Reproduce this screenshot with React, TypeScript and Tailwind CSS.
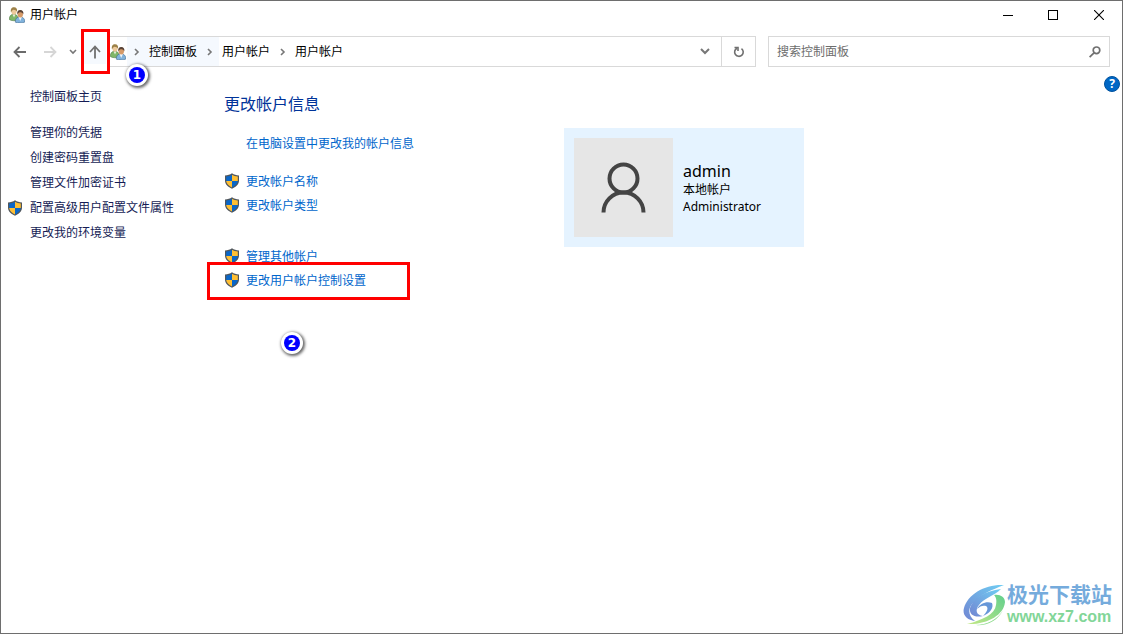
import { useState } from "react";
import type { ReactNode } from "react";

interface Crumb {
  label: string;
  hot?: boolean;
}

interface Task {
  label: string;
  shield?: boolean;
}

const crumbs: Crumb[] = [{ label: "控制面板", hot: true }, { label: "用户帐户" }, { label: "用户帐户" }];

const sideTasks: Task[] = [
  { label: "管理你的凭据" },
  { label: "创建密码重置盘" },
  { label: "管理文件加密证书" },
  { label: "配置高级用户配置文件属性", shield: true },
  { label: "更改我的环境变量" },
];

function UsersIcon() {
  return (
    <svg width="16" height="16" viewBox="0 0 16 16" className="shrink-0" aria-hidden="true">
      <path d="M0.300 12.500C0.300 9 1.800 7.300 4.800 7.300S9 9 9 13C6.500 14 2.500 14 .3 12.500Z" fill="#7fb668" stroke="#4d7a45" strokeWidth=".6" />
      <path d="M3.600 7.500L5 10.500 6.400 7.500Z" fill="#e8f0e0" />
      <ellipse cx="5" cy="4.300" rx="2.600" ry="3.500" fill="#edc99a" />
      <path d="M2 5.500C1.300 1.800 2.600.3 5 .3S8.500 1.900 8 4.600C7.300 3.500 6 2.800 4.600 2.700 3.500 3 2.600 3.900 2 5.500Z" fill="#9c8148" />
      <path d="M6.300 15.200C6.100 11.500 8 9.900 11 9.900S15.900 11.600 15.900 15C13.500 16.200 8.500 16.200 6.300 15.200Z" fill="#80b2dc" stroke="#456b90" strokeWidth=".6" />
      <path d="M9.600 10L11.200 14 12.900 10Z" fill="#f1f6fa" />
      <ellipse cx="11.300" cy="7" rx="2.700" ry="3.500" fill="#d69a68" />
      <path d="M8.300 7.400C7.800 4.300 9.100 2.900 11.300 2.900S14.900 4.400 14.300 7.600C13.900 6.100 12.900 5.500 11.600 5.300 10 5.300 9.100 5.900 8.300 7.400Z" fill="#594336" />
    </svg>
  );
}

function ShieldIcon() {
  return (
    <svg width="16" height="16" viewBox="0 0 16 16" className="shrink-0" aria-hidden="true">
      <path d="M8 .3C6 1.800 3.800 2.300 1 2.500V7.500C1 11.500 4.300 14 8 15.700 11.700 14 15 11.500 15 7.500V2.500C12.200 2.300 10 1.800 8 .3Z" fill="#50565c" />
      <path d="M8 1.700C6.200 2.900 4.500 3.300 2.200 3.500V8H8Z" fill="#0a66c8" />
      <path d="M8 1.700C9.800 2.900 11.500 3.300 13.800 3.500V8H8Z" fill="#ffbf33" />
      <path d="M2.200 8C2.400 11 5 12.900 8 14.500V8Z" fill="#ffbf33" />
      <path d="M13.800 8C13.600 11 11 12.900 8 14.500V8Z" fill="#0a66c8" />
    </svg>
  );
}

function Arrow({ d }: { d: string }) {
  return (
    <svg width="14" height="14" viewBox="0 0 14 14" fill="none" stroke="currentColor" strokeWidth="1.800" aria-hidden="true">
      <path d={d} />
    </svg>
  );
}

function ChevronRight() {
  return (
    <span className="flex w-[19px] justify-center">
      <svg width="6" height="8" viewBox="0 0 6 8" fill="none" stroke="#777" strokeWidth="1.600" aria-hidden="true">
        <path d="M1 1L4 4 1 7" />
      </svg>
    </span>
  );
}

function Step({ children, className }: { children: ReactNode; className: string }) {
  return (
    <span className={`absolute z-10 flex size-[22px] items-center justify-center rounded-full bg-white shadow-[1px_1px_3px_1px_rgba(0,0,0,0.6)] ${className}`}>
      <span className="flex size-4 items-center justify-center rounded-full bg-[#0000ff] font-['DejaVu_Sans',sans-serif] text-xs leading-4 font-bold text-white">
        {children}
      </span>
    </span>
  );
}

function TitleBar() {
  return (
    <header className="flex h-7 items-center pl-2">
      <UsersIcon />
      <h1 className="ml-[5px] flex-1 text-black">用户帐户</h1>
      <button aria-label="最小化" className="flex h-7 w-[45px] items-center justify-center">
        <svg width="10" height="10" viewBox="0 0 10 10" stroke="#000" shapeRendering="crispEdges"><path d="M0 5.500H10" /></svg>
      </button>
      <button aria-label="最大化" className="flex h-7 w-[45px] items-center justify-center">
        <svg width="10" height="10" viewBox="0 0 10 10" fill="none" stroke="#000" shapeRendering="crispEdges"><path d="M.5.5H9.500V9.500H.5Z" /></svg>
      </button>
      <button aria-label="关闭" className="flex h-7 w-[47px] items-center justify-center">
        <svg width="10" height="10" viewBox="0 0 10 10" fill="none" stroke="#000" strokeWidth="1.100"><path d="M0 0L10 10M10 0L0 10" /></svg>
      </button>
    </header>
  );
}

function AddressBar() {
  return (
    <nav aria-label="地址" className="flex h-[31px] flex-1 border border-l-0 border-[#d9d9d9]">
      <div className="flex flex-1 items-center pl-px">
        <UsersIcon />
        <ol className="flex h-full items-center">
          <li className="ml-px flex h-full items-center bg-[#f5f9fe]"><ChevronRight /></li>
          {crumbs.map((crumb, i) => (
            <li key={i} className={crumb.hot ? "flex h-full items-center bg-[#f5f9fe]" : "flex h-full items-center"}>
              <a href="#" className="px-[3px] text-black">{crumb.label}</a>
              {i < crumbs.length - 1 && <ChevronRight />}
            </li>
          ))}
        </ol>
      </div>
      <button aria-label="以前的位置" className="flex w-8 items-center justify-center">
        <svg width="10" height="7" viewBox="0 0 10 7" fill="none" stroke="#777" strokeWidth="2"><path d="M1 1L5 5 9 1" /></svg>
      </button>
      <button aria-label="刷新" className="flex w-[34px] items-center justify-center border-l border-[#d9d9d9]">
        <svg width="12" height="12" viewBox="0 0 12 12" fill="none" stroke="#707070" strokeWidth="1.600">
          <path d="M8.500 2.600A4.300 4.300 0 1 1 4 2.200" />
          <path d="M1.500 1.500H5V5" />
        </svg>
      </button>
    </nav>
  );
}

function Toolbar() {
  const [query, setQuery] = useState("");

  return (
    <div className="mt-[7px] flex items-center pr-3">
      <button aria-label="后退" className="flex h-6 w-[38px] items-center justify-center text-[#6b6b6b]">
        <Arrow d="M13 7H2M6.500 2L1.500 7 6.500 12" />
      </button>
      <button aria-label="前进" className="flex h-6 w-[22px] items-center justify-center text-[#d6d6d6]">
        <Arrow d="M1 7H12M7.500 2L12.500 7 7.500 12" />
      </button>
      <button aria-label="最近浏览的位置" className="flex h-6 w-[23px] items-center justify-center">
        <svg width="8" height="6" viewBox="0 0 8 6" fill="none" stroke="#777" strokeWidth="1.600"><path d="M1 1L4 4 7 1" /></svg>
      </button>
      <button aria-label="向上" className="relative flex h-6 w-[22px] items-center justify-center bg-[#f5f9fe] text-[#707070]">
        <Arrow d="M7 13.500V2M2 7L7 1.500 12 7" />
        <span className="absolute -top-[11px] -left-[3px] z-10 h-[45px] w-[29px] border-3 border-[#ff0000]" />
        <Step className="top-6 left-[42px]">1</Step>
      </button>
      <div className="ml-[3px] flex flex-1 gap-3">
        <AddressBar />
        <label className="flex h-[31px] w-[342px] items-center border border-[#d9d9d9] px-2">
          <input
            aria-label="搜索控制面板"
            placeholder="搜索控制面板"
            value={query}
            onChange={(e) => setQuery(e.target.value)}
            className="min-w-0 flex-1 outline-none placeholder:text-[#6d6d6d]"
          />
          <svg width="12" height="12" viewBox="0 0 12 12" fill="none" stroke="#707070" strokeWidth="1.700" aria-hidden="true">
            <circle cx="7.500" cy="4.300" r="3.300" />
            <path d="M5 6.800L.6 11.200" />
          </svg>
        </label>
      </div>
    </div>
  );
}

function Sidebar() {
  return (
    <aside className="w-[223px] shrink-0 pt-[17px] text-[#151c55]">
      <a href="#" className="ml-[29px] block leading-[25px]">控制面板主页</a>
      <ul className="mt-[11px]">
        {sideTasks.map((task) => (
          <li key={task.label} className="flex h-[25px] items-center pl-1.5">
            <span className="w-[23px]">{task.shield && <ShieldIcon />}</span>
            <a href="#">{task.label}</a>
          </li>
        ))}
      </ul>
    </aside>
  );
}

function TaskLink({ children }: { children: string }) {
  return (
    <li className="flex h-6 items-center gap-1.5">
      <ShieldIcon />
      <a href="#" className="pt-px">{children}</a>
    </li>
  );
}

function AccountCard() {
  return (
    <section aria-label="admin" className="mt-[61px] flex h-[119px] w-60 items-center gap-2.5 bg-[#e5f3ff] p-2.5 text-black">
      <div className="flex size-[99px] items-center justify-center bg-[#e6e6e6]">
        <svg width="46" height="52" viewBox="0 0 46 52" fill="none" stroke="#444" strokeWidth="4" aria-hidden="true">
          <circle cx="22.500" cy="16.500" r="14" />
          <path d="M2.500 50.500A20 20 0 0 1 42.500 50.500" />
        </svg>
      </div>
      <div>
        <p className="text-base leading-5">admin</p>
        <p className="leading-[17px]">本地帐户</p>
        <p className="leading-[17px]">Administrator</p>
      </div>
    </section>
  );
}

function Watermark() {
  return (
    <div className="absolute right-2.5 bottom-1.5 flex items-center gap-px">
      <svg width="43" height="42" viewBox="0 0 43 42" aria-hidden="true">
        <defs>
          <linearGradient id="wing" x1="0" y1="1" x2="1" y2="0">
            <stop offset="0" stopColor="#7286d2" />
            <stop offset="1" stopColor="#6fcdf3" />
          </linearGradient>
          <linearGradient id="leaf" x1="0" y1="1" x2="1" y2="0">
            <stop offset="0" stopColor="#c3e886" />
            <stop offset="1" stopColor="#62cf8d" />
          </linearGradient>
        </defs>
        <path d="M41 1C22 0 5 10 1 24-1 31 4 36 12 37 5 32 5 25 9 20 17 10 29 6 41 1Z" fill="url(#wing)" />
        <path d="M38 5C22 7 10 14 7 24 6 31 12 34 20 32 13 31 12 26 16 21 21 14 31 12 38 5Z" fill="url(#wing)" />
        <path d="M14 25C17 19 24 17 29 19 31 24 27 29 20 32 24 28 26 24 23 22 20 21 17 22 14 25Z" fill="#6797d8" />
        <path d="M31 11C37 10 42 13 42 18 41 31 24 41 4 40 20 36 32 30 33 21 34 16 33 13 31 11Z" fill="url(#leaf)" />
        <path d="M12 41C24 41 35 35 40 26 35 37 24 42 12 41Z" fill="#8edb8c" />
      </svg>
      <div className="font-['Liberation_Sans','Noto_Sans_CJK_SC',sans-serif] font-bold">
        <p className="text-[21px] leading-6 text-[#75abdc]">极光下载站</p>
        <p className="text-base leading-5 text-[#82d698]">www.xz7.com</p>
      </div>
    </div>
  );
}

export default function App() {
  return (
    <div className="relative flex min-h-screen flex-col border border-[#6e6e6e] bg-white font-['Noto_Sans','Noto_Sans_CJK_SC',sans-serif] text-xs">
      <TitleBar />
      <Toolbar />
      <div className="flex flex-1">
        <Sidebar />
        <main className="flex flex-1 items-start text-[#0066cc]">
          <div className="w-[340px] shrink-0 pt-[25px]">
            <h2 className="text-base leading-6 text-[#003399]">更改帐户信息</h2>
            <a href="#" className="mt-4 ml-[22px] block leading-6">在电脑设置中更改我的帐户信息</a>
            <ul className="mt-[13px]">
              <TaskLink>更改帐户名称</TaskLink>
              <TaskLink>更改帐户类型</TaskLink>
            </ul>
            <ul className="relative mt-[27px]">
              <TaskLink>管理其他帐户</TaskLink>
              <TaskLink>更改用户帐户控制设置</TaskLink>
              <li aria-hidden="true" className="absolute top-[18px] -left-[17px] h-[38px] w-[203px] border-3 border-[#ff0000]" />
              <li><Step className="top-[88px] left-[57px]">2</Step></li>
            </ul>
          </div>
          <AccountCard />
        </main>
        <button aria-label="帮助" className="mt-[9px] mr-0.5 flex size-4 items-center justify-center rounded-full border border-[#00529e] bg-[#0067c5] text-xs leading-4 font-bold text-white">
          ?
        </button>
      </div>
      <Watermark />
    </div>
  );
}
